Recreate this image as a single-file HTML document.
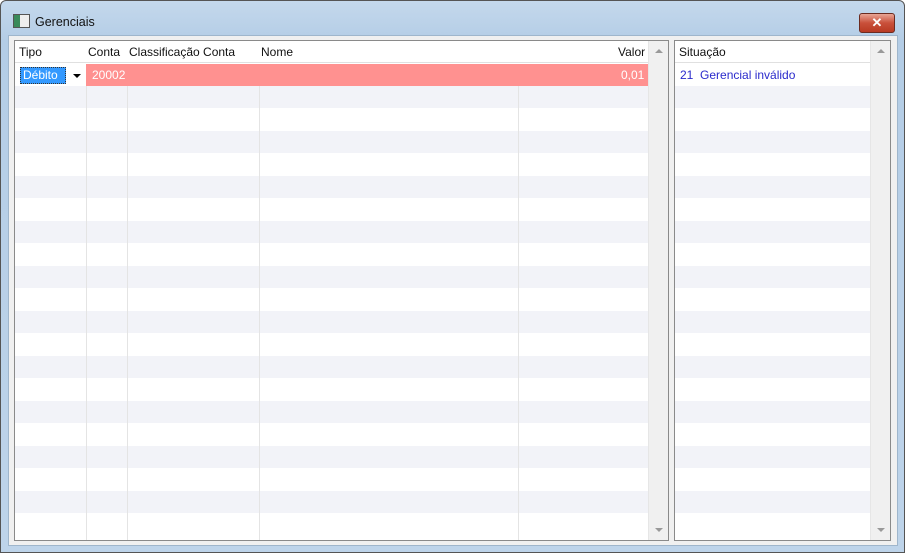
<!DOCTYPE html>
<html><head><style>
body{margin:0;width:905px;height:553px;overflow:hidden;background:#fff;font-family:"Liberation Sans",sans-serif;font-size:12px}
.win{position:absolute;left:0;top:0;width:903px;height:551px;border:1px solid #555;border-radius:6px 6px 0 0;background:linear-gradient(#c4d8ec,#b4cde6 40px,#bed4ea);}
.title{position:absolute;left:34px;top:14px;font-size:12.5px;color:#111}
.icon{position:absolute;left:12px;top:13px;width:15px;height:12px;border:1px solid #555;background:linear-gradient(90deg,#3a8a5a 0 6px,#eee 6px)}
.close{position:absolute;left:858px;top:12px;width:34px;height:18px;border:1px solid #6b2b20;border-radius:3px;background:linear-gradient(#e8a595,#c9503a 50%,#b83a22);color:#fff;text-align:center;font-weight:bold;font-size:13px;line-height:18px}
.client{position:absolute;left:7px;top:34px;width:888px;height:509px;background:#f0f0f0;border:1px solid #9fb6cc}
.box{position:absolute;background:#fff;border:1px solid #8a8a8a;overflow:hidden}
.row{position:absolute;left:0;right:0;height:22.5px}
.g{background:#f2f3f8}
.vl{position:absolute;top:0;bottom:0;width:1px;background:#e4e4e4}
.hd{position:absolute;top:0;left:0;right:0;height:21px;background:#fff;border-bottom:1px solid #e0e0e0}
.hd span{position:absolute;top:4px;color:#111}
.sb{position:absolute;top:0;bottom:0;width:19px;background:#f0f0f0;border-left:1px solid #e6e6e6}
.up,.dn{position:absolute;left:6px;width:0;height:0;border-left:4px solid transparent;border-right:4px solid transparent}
.up{top:8px;border-bottom:4px solid #999}
.dn{bottom:8px;border-top:4px solid #999}
</style></head><body>
<div class="win">
<div class="icon"></div><div class="title">Gerenciais</div>
<div class="close">✕</div>
<div class="client"></div>
<div class="box" style="left:13px;top:39px;width:653px;height:499px">
 <div class="hd"><span style="left:4px">Tipo</span><span style="left:73px">Conta</span><span style="left:114px">Classificação Conta</span><span style="left:246px">Nome</span><span style="left:603px">Valor</span></div>
 <div style="position:absolute;left:71px;top:23px;width:563px;height:22px;background:#ff9190"></div>
 <span style="position:absolute;left:77px;top:27px;color:#fff">20002</span>
 <span style="position:absolute;left:606px;top:27px;color:#fff">0,01</span>
 <div style="position:absolute;left:5px;top:26px;width:42px;height:15px;border:1px dotted #333;background:#3399ff;color:#fff;line-height:15px;padding-left:2px">Débito</div>
 <div style="position:absolute;left:58px;top:33px;border-left:4px solid transparent;border-right:4px solid transparent;border-top:4px solid #000"></div>
 <div class="sb" style="right:0"><div class="up"></div><div class="dn"></div></div>
</div>
<div class="box" style="left:673px;top:39px;width:215px;height:499px">
 <div class="hd"><span style="left:4px">Situação</span></div>
 <span style="position:absolute;left:5px;top:27px;color:#2a2acc">21&nbsp; Gerencial inválido</span>
 <div class="sb" style="right:0"><div class="up"></div><div class="dn"></div></div>
</div>
</div>
<script>
var L=document.querySelectorAll('.box');
[[L[0],634],[L[1],195]].forEach(function(p){
 var b=p[0];var h='';
 for(var i=1;i<21;i++){h+='<div class="row'+(i%2?' g':'')+'" style="top:'+(22+i*22.5)+'px;width:'+p[1]+'px"></div>';}
 if(b===L[0]){[71,112,244,503].forEach(function(x){h+='<div class="vl" style="left:'+x+'px;top:45px"></div>';});}
 b.insertAdjacentHTML('afterbegin',h);
});
</script>
</body></html>
